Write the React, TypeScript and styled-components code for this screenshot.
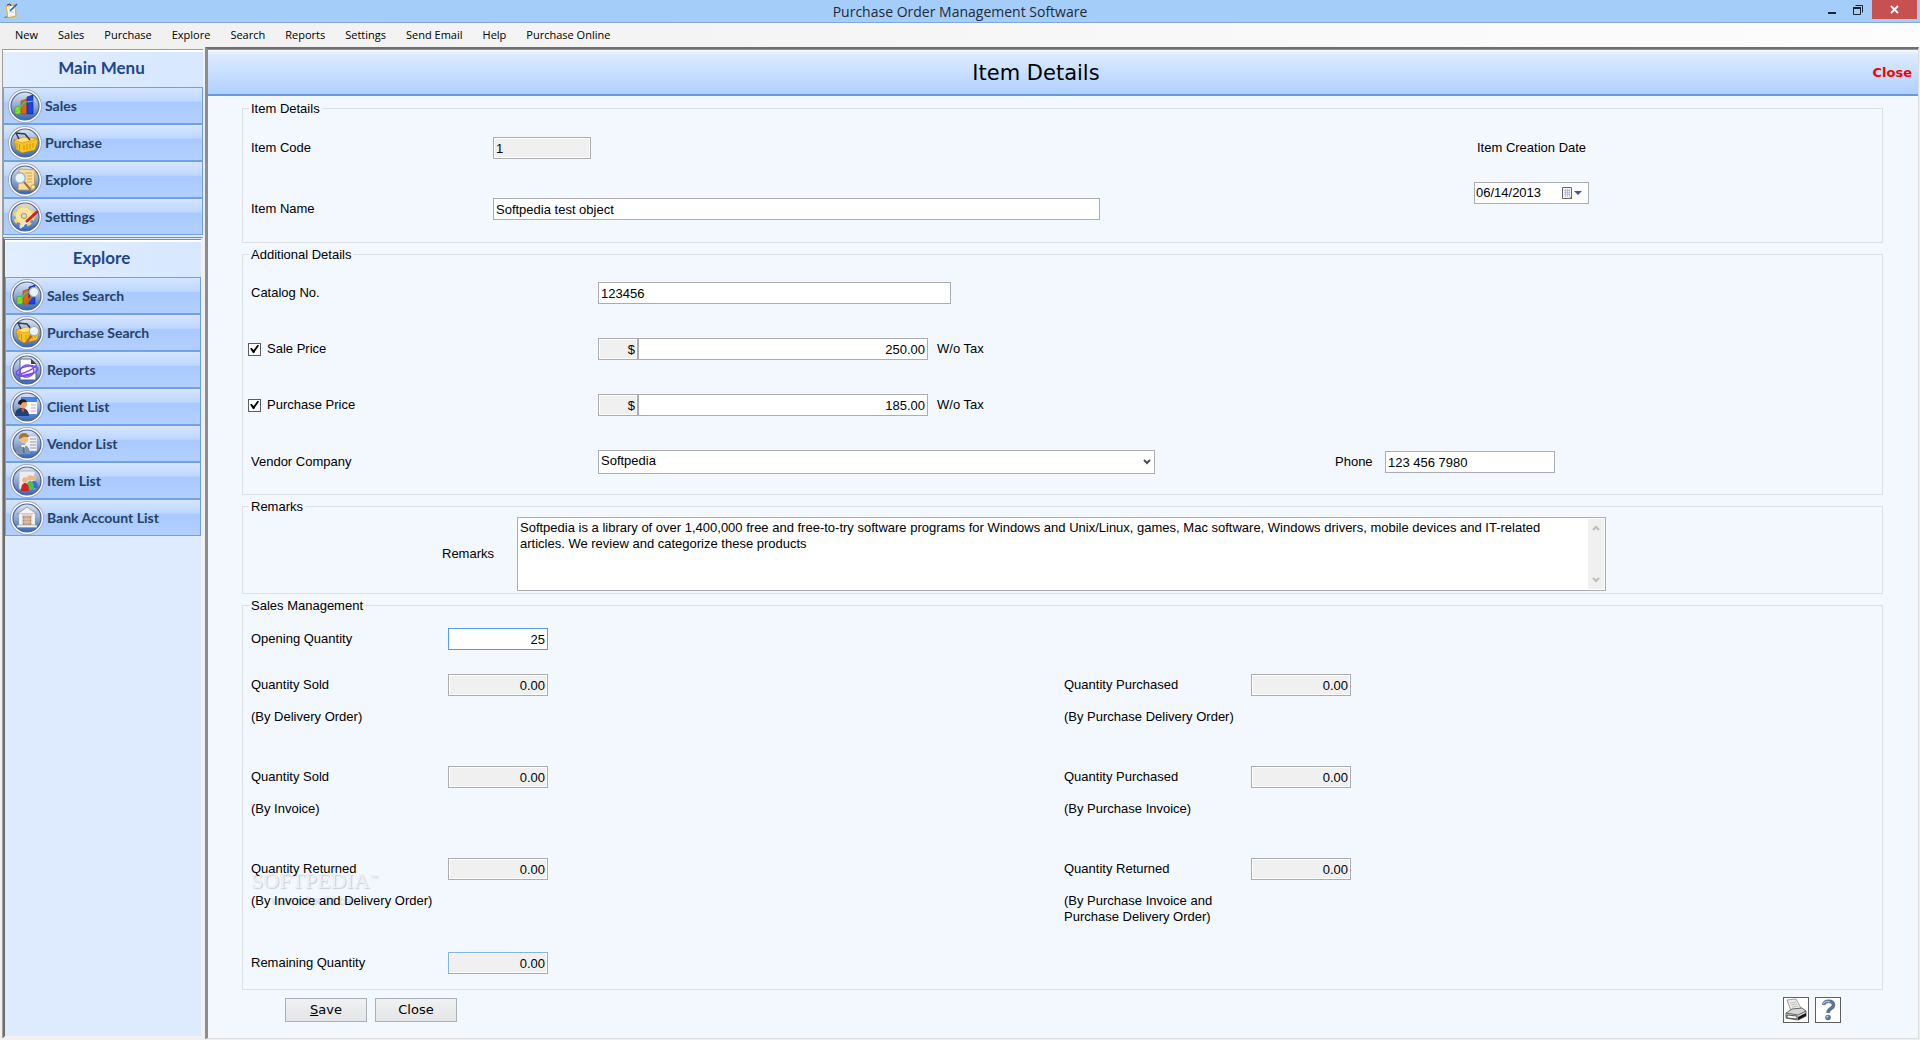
import React, { useState } from "react";
import styled, { createGlobalStyle } from "styled-components";

const uiFont = `"Liberation Sans", Arial, sans-serif`;
const menuFont = `"Open Sans", "Noto Sans", sans-serif`;
const sideFont = `Lato, "Open Sans", sans-serif`;
const wideFont = `"DejaVu Sans", Verdana, sans-serif`;

const GlobalStyle = createGlobalStyle`
  *, *::before, *::after { box-sizing: border-box; }
  html, body { margin: 0; padding: 0; }
  body { font: 13px/16px ${uiFont}; color: #000; background: #f0f0f0; }
  button, input, select, textarea { font: inherit; color: inherit; margin: 0; }
  button { cursor: pointer; }
`;

const Window = styled.div`
  display: flex;
  flex-direction: column;
  min-height: 100vh;
`;

/* ---------- title bar ---------- */
const TitleBar = styled.header`
  display: grid;
  grid-template-columns: 1fr auto 1fr;
  align-items: start;
  height: 23px;
  background: #a4cdf9;
  border-bottom: 1px solid #84a8d6;
`;
const AppIcon = styled.svg`
  width: 16px;
  height: 16px;
  margin: 3px 0 0 3px;
`;
const Caption = styled.h1`
  margin: 0;
  font: 400 14px/23px ${menuFont};
  color: #222a35;
`;
const WindowButtons = styled.div`
  display: flex;
  justify-content: flex-end;
  padding-right: 3px;
`;
const WindowButton = styled.button<{ $danger?: boolean }>`
  display: flex;
  align-items: center;
  justify-content: center;
  width: ${(p) => (p.$danger ? 45 : 28)}px;
  height: 19px;
  padding: 0;
  border: 0;
  background: ${(p) => (p.$danger ? "#c75050" : "transparent")};
`;

/* ---------- menu bar ---------- */
const MenuBar = styled.nav`
  display: flex;
  height: 24px;
  padding-left: 5px;
  background: linear-gradient(90deg, #f0f0f0, #fdfdfd);
`;
const MenuItem = styled.button`
  padding: 0 10px;
  border: 0;
  background: none;
  font: 400 11px/24px ${menuFont};
  white-space: nowrap;
`;

/* ---------- body ---------- */
const Body = styled.div`
  flex: 1;
  display: grid;
  grid-template-columns: 205px minmax(0, 1fr);
  padding: 0 1px 1px 0;
`;
const Sidebar = styled.aside`
  display: flex;
  flex-direction: column;
  margin: 2px 2px 1px 2px;
  border-left: 1px solid #a0a0a0;
  border-top: 1px solid #a0a0a0;
  background: #deebff;
`;
const SidePanel = styled.section<{ $inset?: boolean }>`
  ${(p) =>
    p.$inset &&
    `flex: 1;
     margin-top: 2px;
     border-left: 2px solid #6b6b6b;
     border-top: 3px double #8a8a8a;
     border-right: 2px solid #f2f2f2;
     border-bottom: 2px solid #f2f2f2;`}
`;
const SideTitle = styled.h2`
  margin: 0;
  height: 37px;
  padding-right: 3px;
  border-top: 2px solid #fff;
  background: linear-gradient(90deg, #e2eeff, #d6e7ff);
  font: 700 17px/32px ${sideFont};
  color: #1f4690;
  text-align: center;
`;
const SideButton = styled.button`
  display: flex;
  align-items: center;
  gap: 2px;
  width: 100%;
  height: 37px;
  padding: 0 3px;
  border: 1px solid #6fa1e8;
  background: linear-gradient(180deg, #d6e5ff 0%, #bed7ff 38%, #a9caff 40%, #b2cfff 100%);
  font: 700 14px/20px ${sideFont};
  color: #27425f;
  text-align: left;
`;
const Round = styled.svg`
  width: 36px;
  height: 36px;
  flex: none;
`;

const Main = styled.main`
  display: flex;
  flex-direction: column;
  border-left: 3px solid #8d8d8d;
  border-top: 2px solid #6e6e6e;
  border-right: 1px solid #dcdcdc;
  border-bottom: 1px solid #dcdcdc;
  background: #f3f7fe;
`;
const PageHeader = styled.div`
  display: flex;
  align-items: center;
  height: 47px;
  padding: 2px 6px 0 0;
  border-top: 1px solid #6a9ad8;
  border-bottom: 2px solid #6a98d6;
  background: linear-gradient(180deg, #f6faff 0, #deebff 4px, #aed1ff 100%);
`;
const PageTitle = styled.h2`
  flex: 1;
  margin: 0;
  font: 400 21px/28px ${wideFont};
  text-align: center;
`;
const CloseLink = styled.button`
  width: 48px;
  padding: 0;
  border: 0;
  background: none;
  font: 700 13px/16px ${wideFont};
  color: #f60000;
  text-align: right;
`;

/* ---------- form ---------- */
const Form = styled.form`
  display: flex;
  flex-direction: column;
  gap: 4px;
  padding: 5px 35px 0 34px;
`;
const Group = styled.fieldset<{ $pad: string }>`
  position: relative;
  min-width: 0;
  margin: 0;
  padding: ${(p) => p.$pad};
  border: 1px solid #dcdfe3;
`;
const Legend = styled.legend`
  margin-left: -2px;
  padding: 0 2px;
  line-height: 15px;
`;
const Columns = styled.div<{ $cols: string }>`
  display: grid;
  grid-template-columns: ${(p) => p.$cols};
  align-items: center;
`;
const Stack = styled.div<{ $gap: number }>`
  display: flex;
  flex-direction: column;
  gap: ${(p) => p.$gap}px;
`;
const FieldLabel = styled.label<{ $col?: number }>`
  display: flex;
  align-items: center;
  min-height: 22px;
  ${(p) => p.$col && `grid-column: ${p.$col};`}
`;
const Input = styled.input<{ $width?: string; $right?: boolean; $accent?: string }>`
  width: ${(p) => p.$width || "100%"};
  min-width: 0;
  height: 22px;
  padding: 0 2px;
  border: 1px solid ${(p) => p.$accent || "#abadb3"};
  border-radius: 0;
  background: ${(p) => (p.readOnly ? "#f0f0f0" : "#fff")};
  box-shadow: inset 0 0 0 1px #fff;
  text-align: ${(p) => (p.$right ? "right" : "left")};
  outline: none;
`;
const Suffix = styled.span`
  padding-left: 9px;
`;
const DateStack = styled.div`
  display: flex;
  flex-direction: column;
  gap: 23px;
  align-self: start;
`;
const DateLabel = styled(FieldLabel)`
  padding-left: 3px;
  white-space: nowrap;
`;
const DateBox = styled.div`
  display: flex;
  align-items: center;
  height: 22px;
  padding-right: 5px;
  border: 1px solid #abadb3;
  background: #fff;
`;
const DateInput = styled.input`
  flex: 1;
  min-width: 0;
  padding: 0 1px;
  border: 0;
  outline: none;
  background: none;
`;
const IconOnly = styled.button`
  display: flex;
  padding: 0;
  border: 0;
  background: none;
`;
const CheckLabel = styled.label`
  display: flex;
  align-items: center;
  gap: 6px;
  margin-left: -3px;
`;
const CheckBox = styled.input`
  appearance: none;
  display: grid;
  place-items: center;
  width: 13px;
  height: 13px;
  border: 1px solid #5c5c5c;
  background: #fff;
  &:checked::after {
    content: "";
    width: 9px;
    height: 9px;
    background: #000;
    clip-path: polygon(0 42%, 20% 38%, 40% 62%, 84% 4%, 100% 12%, 44% 96%, 30% 92%);
  }
`;
const SelectWrap = styled.div`
  position: relative;
  svg {
    position: absolute;
    right: 4px;
    top: 9px;
    pointer-events: none;
  }
`;
const Select = styled.select`
  appearance: none;
  display: block;
  width: 100%;
  height: 24px;
  padding: 0 20px 2px 2px;
  border: 1px solid #abadb3;
  border-radius: 0;
  background: #fff;
  outline: none;
`;
const MemoBox = styled.div`
  display: flex;
  height: 74px;
  padding-right: 1px;
  border: 1px solid #abadb3;
  background: #fff;
`;
const Memo = styled.textarea`
  flex: 1;
  min-width: 0;
  padding: 2px 0 0 2px;
  border: 0;
  outline: none;
  resize: none;
  overflow: hidden;
  background: none;
`;
const ScrollTrack = styled.div`
  display: flex;
  flex-direction: column;
  justify-content: space-between;
  align-items: center;
  width: 16px;
  margin: 1px 0;
  padding: 6px 0;
  background: #f0f0f0;
`;
const QtyGrid = styled.div`
  position: relative;
  display: grid;
  grid-template-columns: 297px 516fr 287px 531fr;
  grid-template-rows: 46px 92px 92px 94px 22px;
`;
const QtyCell = styled.div<{ $side?: boolean }>`
  display: grid;
  grid-template-columns: minmax(0, 1fr) 100px;
  grid-template-rows: 22px auto;
  row-gap: 13px;
  align-content: start;
  grid-column: ${(p) => (p.$side ? 3 : 1)};
`;
const Note = styled.span`
  grid-column: 1;
`;
const Watermark = styled.div`
  position: absolute;
  left: 8px;
  top: 256px;
  display: flex;
  flex-direction: column;
  align-items: center;
  pointer-events: none;
  color: #eceff5;
  text-shadow: 1px 1px 1px #c6cad3;
  font: 400 22px/24px "Liberation Serif", serif;
`;
const Trade = styled.sup`
  font: 400 8px/8px ${uiFont};
`;
const WatermarkSite = styled.span`
  font: 400 10px/16px ${uiFont};
  color: #e1e5ee;
`;

const Footer = styled.div`
  display: flex;
  align-items: center;
  height: 26px;
  margin-top: 3px;
  padding: 0 42px 0 43px;
`;
const PushButton = styled.button`
  width: 82px;
  height: 24px;
  margin-right: 8px;
  padding: 0;
  border: 1px solid #a9b0b8;
  background: linear-gradient(180deg, #f1f1f1, #e3e5e8);
  font: 400 13px/22px ${wideFont};
`;
const Tools = styled.div`
  display: flex;
  gap: 6px;
  margin-left: auto;
`;
const ToolButton = styled.button`
  display: flex;
  align-items: center;
  justify-content: center;
  width: 26px;
  height: 26px;
  padding: 0;
  border: 1px solid #5f5f5f;
  background: #fff;
`;

/* ---------- sidebar pictures ---------- */
const Bars = () => (
  <>
    <path d="M8 19l6-1v8H8z" fill="#8fe010" stroke="#4c9a10" strokeWidth="0.6" />
    <path d="M14 13l6-2v15h-6z" fill="#e0621c" stroke="#a03c10" strokeWidth="0.6" />
    <path d="M20 9l6-2v19h-6z" fill="#1d45dc" stroke="#0c2796" strokeWidth="0.6" />
    <path d="M8 24c5-1 6-9 11-10 3 0 4-1 8-1" fill="none" stroke="#2fd98a" strokeWidth="1.2" />
  </>
);
const Basket = () => (
  <>
    <path d="M7 15l3-1 20-1 1 3-3 9-13 3-6-4z" fill="#f9c422" stroke="#b97f08" strokeWidth="0.7" />
    <path d="M7 15l10-3 14 2-16 4z" fill="#ffe070" stroke="#c68c0c" strokeWidth="0.6" />
    <path d="M10 18v5M12.500 19v6M17 20v5M20 19v6M23 19v5M26 18v5" stroke="#d3930c" strokeWidth="1" />
    <path d="M12 14l-3-6 9 1 5 6" fill="none" stroke="#323a46" strokeWidth="1.5" strokeLinejoin="round" />
  </>
);
const Lens = ({ x, y }: { x: number; y: number }) => (
  <g transform={`translate(${x} ${y})`}>
    <path d="M-2 4l-6 8" stroke="#b06a2a" strokeWidth="2.2" strokeLinecap="round" />
    <circle r="4.6" fill="#e8f2fc" stroke="#9fb3c8" strokeWidth="1.2" />
    <path d="M-2-1a3 3 0 0 1 3-2" stroke="#fff" fill="none" />
  </g>
);
const pictures: Record<string, React.ReactNode> = {
  sales: <Bars />,
  purchase: <Basket />,
  explore: (
    <>
      <path d="M12 7l16 1-1 20H11z" fill="#fbdd98" stroke="#c5923a" strokeWidth="0.8" />
      <path d="M18 11h7M20 14h5M20 17h5M20 20h5" stroke="#d9a148" />
      <path d="M17 20l6 7" stroke="#9a7650" strokeWidth="2.2" strokeLinecap="round" />
      <circle cx="13" cy="16" r="5.2" fill="#e9f4fd" stroke="#9bb0c7" strokeWidth="1.4" />
      <circle cx="26" cy="25" r="2.2" fill="#ffe9b0" stroke="#c78422" strokeWidth="0.8" />
    </>
  ),
  settings: (
    <>
      <circle cx="17" cy="17" r="9" fill="none" stroke="#f8d25c" strokeWidth="4" strokeDasharray="4 3.07" />
      <circle cx="17" cy="17" r="5.6" fill="none" stroke="#fde49a" strokeWidth="5.6" />
      <circle cx="17" cy="17" r="2.6" fill="#cfdcee" stroke="#b98a22" strokeWidth="0.8" />
      <path d="M13 29l8-8" stroke="#e3e7ee" strokeWidth="2.2" />
      <path d="M20 22l10-9" stroke="#d3202a" strokeWidth="3" strokeLinecap="round" />
    </>
  ),
  salesSearch: (
    <>
      <Bars />
      <Lens x={25} y={14} />
    </>
  ),
  purchaseSearch: (
    <>
      <Basket />
      <Lens x={25} y={16} />
    </>
  ),
  reports: (
    <>
      <path d="M11 7h11l5 5v16H11z" fill="#fafaff" stroke="#50545e" strokeWidth="0.9" />
      <path d="M22 7l5 5h-5z" fill="#3a3e4a" />
      <g fill="none" stroke="#7b4bec" strokeWidth="1.4">
        <ellipse cx="18" cy="19" rx="11" ry="4.6" transform="rotate(-14 18 19)" />
        <ellipse cx="18" cy="19" rx="7" ry="6" transform="rotate(-14 18 19)" />
        <path d="M9 23c6-2 13-4 18-9M12 24l13-3" />
      </g>
    </>
  ),
  client: (
    <>
      <path d="M12 8h16v17H12z" fill="#f6f7fd" />
      <path d="M12 8h16v5H12z" fill="#3f86e8" />
      <path d="M22 16h5M22 19h5M22 22h5" stroke="#d9a6d8" strokeWidth="1.1" />
      <path d="M6 27c0-6 3-8 7-8s7 3 7 8z" fill="#1f3f78" />
      <path d="M12 20l2 4 2-5z" fill="#e64b2a" />
      <circle cx="14" cy="15" r="4.2" fill="#f0a56c" />
      <path d="M9 15c0-6 8-6 9-2-3 1-5-1-6 3z" fill="#2c1a14" />
    </>
  ),
  vendor: (
    <>
      <path d="M16 10h12v15H16z" fill="#eef2f8" stroke="#a9b4c4" strokeWidth="0.6" />
      <path d="M21 13h6M21 16h6M21 19h6M21 22h6" stroke="#8e9aac" />
      <path d="M7 28c0-7 3-9 7-9s7 3 7 9z" fill="#8794a6" />
      <path d="M12 19l2 5 3-5z" fill="#f2f5fa" />
      <path d="M14 21l1 6" stroke="#3a6fd0" strokeWidth="1.6" />
      <circle cx="15" cy="13" r="4.4" fill="#e9c08c" />
      <path d="M10 13c-1-7 9-8 10-2-3 0-6-1-7 1z" fill="#a3762e" />
    </>
  ),
  item: (
    <>
      <path d="M10 8h16v18H10z" fill="#ececee" stroke="#a8adb6" strokeWidth="0.8" />
      <circle cx="25" cy="15" r="2.6" fill="#eab88a" />
      <path d="M21 26c0-7 2-8 4-8s4 2 4 7z" fill="#3a6fd8" />
      <circle cx="21" cy="15" r="2.8" fill="#eab88a" />
      <path d="M17 27c0-7 2-9 4-9s4 2 4 8z" fill="#48c052" />
      <circle cx="16" cy="17" r="2.8" fill="#eab88a" />
      <path d="M12 28c0-6 2-8 4-8s4 2 4 8z" fill="#d8201c" />
    </>
  ),
  bank: (
    <>
      <path d="M8 14l10-7 10 7z" fill="#f4f4f4" stroke="#8d8f96" strokeWidth="0.8" />
      <path d="M10 14h16v11H10z" fill="#d9d6d2" />
      <path d="M14 16h8v9h-8z" fill="#b98a68" />
      <path d="M16 16v9M18 16v9M20 16v9M14 19h8M14 22h8" stroke="#f0dccb" strokeWidth="0.7" />
      <path d="M11.500 14v11M24.500 14v11" stroke="#fafafa" strokeWidth="2.2" />
      <path d="M8 25h20v2.500H8z" fill="#f4f4f4" stroke="#8d8f96" strokeWidth="0.6" />
    </>
  ),
};

const SidePicture = ({ name }: { name: string }) => (
  <Round viewBox="0 0 36 36" aria-hidden="true">
    <defs>
      <linearGradient id={`disc-${name}`} x1="0" y1="0" x2="0" y2="1">
        <stop offset="0" stopColor="#dbe4f2" />
        <stop offset="0.5" stopColor="#8fa9d4" />
        <stop offset="1" stopColor="#3166bd" />
      </linearGradient>
    </defs>
    <circle cx="18" cy="18" r="17" fill="#a3acbd" />
    <circle cx="18" cy="18" r="16" fill="#fff" />
    <circle cx="18" cy="18" r="14" fill={`url(#disc-${name})`} stroke="#4a6290" strokeWidth="1.200" />
    {pictures[name]}
  </Round>
);

const Chevron = ({ up, color }: { up?: boolean; color: string }) => (
  <svg width="8" height="6" viewBox="0 0 8 6" aria-hidden="true">
    <path d={up ? "M1 5l3-3 3 3" : "M1 1l3 3 3-3"} fill="none" stroke={color} strokeWidth="2" />
  </svg>
);

const menus = ["New", "Sales", "Purchase", "Explore", "Search", "Reports", "Settings", "Send Email", "Help", "Purchase Online"];
const mainMenu = [
  ["sales", "Sales"],
  ["purchase", "Purchase"],
  ["explore", "Explore"],
  ["settings", "Settings"],
];
const exploreMenu = [
  ["salesSearch", "Sales Search"],
  ["purchaseSearch", "Purchase Search"],
  ["reports", "Reports"],
  ["client", "Client List"],
  ["vendor", "Vendor List"],
  ["item", "Item List"],
  ["bank", "Bank Account List"],
];

const remarks =
  "Softpedia is a library of over 1,400,000 free and free-to-try software programs for Windows and Unix/Linux, games, Mac software, Windows drivers, mobile devices and IT-related articles. We review and categorize these products";

interface QtyProps {
  id: string;
  label: string;
  note?: string;
  value?: string;
  side?: boolean;
  editable?: boolean;
  accent?: string;
}
const Quantity = ({ id, label, note, value = "0.00", side, editable, accent }: QtyProps) => (
  <QtyCell $side={side}>
    <FieldLabel htmlFor={id}>{label}</FieldLabel>
    <Input id={id} defaultValue={value} readOnly={!editable} $right $accent={accent} />
    {note && <Note>{note}</Note>}
  </QtyCell>
);

interface PriceProps {
  id: string;
  label: string;
  value: string;
}
const PriceRow = ({ id, label, value }: PriceProps) => {
  const [on, setOn] = useState(true);
  return (
    <Columns $cols="347px 40px 290fr 954fr">
      <CheckLabel>
        <CheckBox type="checkbox" checked={on} onChange={(e) => setOn(e.target.checked)} />
        {label}
      </CheckLabel>
      <Input aria-label={`${label} currency`} defaultValue="$" readOnly $right />
      <Input id={id} aria-label={label} defaultValue={value} $right />
      <Suffix>W/o Tax</Suffix>
    </Columns>
  );
};

export default function App() {
  return (
    <Window>
      <GlobalStyle />
      <TitleBar>
        <AppIcon viewBox="0 0 16 16" aria-hidden="true">
          <path d="M0 15h7l-2-3z" fill="#7d93ad" />
          <path d="M3 3l9-1 1 11-8 2z" fill="#fff" stroke="#e8b32a" strokeWidth="1.300" />
          <path d="M4 2l3-1 1 2" fill="none" stroke="#3a3a3a" />
          <path d="M6 6l5 0M6 9l5 0" stroke="#b9c6dc" />
          <path d="M7 8l7-7" stroke="#2a5bc4" strokeWidth="1.600" />
        </AppIcon>
        <Caption>Purchase Order Management Software</Caption>
        <WindowButtons>
          <WindowButton aria-label="Minimize">
            <svg width="12" height="12" viewBox="0 0 12 12">
              <path d="M4 9h8" stroke="#1f2630" strokeWidth="2" />
            </svg>
          </WindowButton>
          <WindowButton aria-label="Restore">
            <svg width="12" height="12" viewBox="0 0 12 12">
              <path d="M3.500 1.500h7v7M1.500 3.500h7v7h-7z" fill="none" stroke="#1f2630" />
              <path d="M1 4h8" stroke="#1f2630" strokeWidth="2" />
            </svg>
          </WindowButton>
          <WindowButton $danger aria-label="Close window">
            <svg width="9" height="9" viewBox="0 0 9 9">
              <path d="M1 1l7 7M8 1L1 8" stroke="#fff" strokeWidth="1.800" />
            </svg>
          </WindowButton>
        </WindowButtons>
      </TitleBar>
      <MenuBar>
        {menus.map((m) => (
          <MenuItem key={m}>{m}</MenuItem>
        ))}
      </MenuBar>
      <Body>
        <Sidebar>
          <SidePanel>
            <SideTitle>Main Menu</SideTitle>
            {mainMenu.map(([icon, text]) => (
              <SideButton key={icon}>
                <SidePicture name={icon} />
                {text}
              </SideButton>
            ))}
          </SidePanel>
          <SidePanel $inset>
            <SideTitle>Explore</SideTitle>
            {exploreMenu.map(([icon, text]) => (
              <SideButton key={icon}>
                <SidePicture name={icon} />
                {text}
              </SideButton>
            ))}
          </SidePanel>
        </Sidebar>
        <Main>
          <PageHeader>
            <PageTitle>Item Details</PageTitle>
            <CloseLink>Close</CloseLink>
          </PageHeader>
          <Form onSubmit={(e) => e.preventDefault()}>
            <Group $pad="21px 0 22px 8px">
              <Legend>Item Details</Legend>
              <Columns $cols="849fr 374fr 115px 293fr">
                <Stack $gap={39}>
                  <Columns $cols="242px minmax(0, 1fr)">
                    <FieldLabel htmlFor="code">Item Code</FieldLabel>
                    <Input id="code" defaultValue="1" readOnly $width="98px" />
                  </Columns>
                  <Columns $cols="242px minmax(0, 1fr)">
                    <FieldLabel htmlFor="name">Item Name</FieldLabel>
                    <Input id="name" defaultValue="Softpedia test object" />
                  </Columns>
                </Stack>
                <span />
                <DateStack>
                  <DateLabel htmlFor="created">Item Creation Date</DateLabel>
                  <DateBox>
                    <DateInput id="created" defaultValue="06/14/2013" />
                    <IconOnly type="button" aria-label="Open calendar">
                      <svg width="22" height="14" viewBox="0 0 22 14">
                        <path d="M1.500 1.500h9v11h-9z" fill="#f2f3f7" stroke="#6c6464" />
                        <path d="M3 4.500h6M3 6.500h6M3 8.500h6M4.500 3v8M6.500 3v8M8.500 3v8" stroke="#a9b3cb" strokeWidth="0.700" />
                        <path d="M8 13l3-3v3z" fill="#6c6464" />
                        <path d="M13 5h8l-4 4z" fill="#44597f" />
                      </svg>
                    </IconOnly>
                  </DateBox>
                </DateStack>
              </Columns>
            </Group>

            <Group $pad="20px 0 20px 8px">
              <Legend>Additional Details</Legend>
              <Stack $gap={34}>
                <Columns $cols="347px 353fr 931fr">
                  <FieldLabel htmlFor="catalog">Catalog No.</FieldLabel>
                  <Input id="catalog" defaultValue="123456" />
                </Columns>
                <PriceRow id="sale" label="Sale Price" value="250.00" />
                <PriceRow id="buy" label="Purchase Price" value="185.00" />
                <Columns $cols="347px 557fr 180fr 50px 170fr 327fr">
                  <FieldLabel htmlFor="vendor">Vendor Company</FieldLabel>
                  <SelectWrap>
                    <Select id="vendor" defaultValue="Softpedia">
                      <option>Softpedia</option>
                    </Select>
                    <Chevron color="#4c4c4c" />
                  </SelectWrap>
                  <FieldLabel htmlFor="phone" $col={4}>
                    Phone
                  </FieldLabel>
                  <Input id="phone" defaultValue="123 456 7980" />
                </Columns>
              </Stack>
            </Group>

            <Group $pad="3px 0 2px 8px">
              <Legend>Remarks</Legend>
              <Columns $cols="191px 75px 1089fr 276fr">
                <FieldLabel htmlFor="remarks" $col={2}>
                  Remarks
                </FieldLabel>
                <MemoBox>
                  <Memo id="remarks" defaultValue={remarks} />
                  <ScrollTrack>
                    <Chevron up color="#bcbcbc" />
                    <Chevron color="#bcbcbc" />
                  </ScrollTrack>
                </MemoBox>
              </Columns>
            </Group>

            <Group $pad="15px 0 15px 8px">
              <Legend>Sales Management</Legend>
              <Watermark>
                <span>
                  SOFTPEDIA<Trade>™</Trade>
                </span>
                <WatermarkSite>www.softpedia.com</WatermarkSite>
              </Watermark>
              <QtyGrid>
                <Quantity id="opening" label="Opening Quantity" value="25" editable accent="#569de5" />
                <Quantity id="soldDo" label="Quantity Sold" note="(By Delivery Order)" />
                <Quantity id="purDo" side label="Quantity Purchased" note="(By Purchase Delivery Order)" />
                <Quantity id="soldInv" label="Quantity Sold" note="(By Invoice)" />
                <Quantity id="purInv" side label="Quantity Purchased" note="(By Purchase Invoice)" />
                <Quantity id="retSale" label="Quantity Returned" note="(By Invoice and Delivery Order)" />
                <Quantity
                  id="retPur"
                  side
                  label="Quantity Returned"
                  note="(By Purchase Invoice and Purchase Delivery Order)"
                />
                <Quantity id="remaining" label="Remaining Quantity" accent="#7eb4ea" />
              </QtyGrid>
            </Group>

            <Footer>
              <PushButton type="submit">
                <u>S</u>ave
              </PushButton>
              <PushButton type="button">Close</PushButton>
              <Tools>
                <ToolButton type="button" aria-label="Print">
                  <svg width="24" height="24" viewBox="0 0 24 24">
                    <path d="M3 2l9-1 5 9-10 3z" fill="#ececec" stroke="#8a8a8a" strokeWidth="0.800" />
                    <path d="M6 5l6-1M7 7l6-1M8 9l6-1" stroke="#bdbdbd" />
                    <path d="M2 15l6-4 10-1 4 3v5l-8 4-12-2z" fill="#d6d6d6" stroke="#4a4a4a" strokeWidth="0.800" />
                    <path d="M2 15l12 2 8-4" fill="none" stroke="#4a4a4a" strokeWidth="0.800" />
                    <path d="M14 19l8-4v3l-8 4z" fill="#141414" />
                    <path d="M3 17l10 1v3L3 20z" fill="#fafafa" stroke="#333" strokeWidth="0.800" />
                  </svg>
                </ToolButton>
                <ToolButton type="button" aria-label="Help">
                  <svg width="24" height="24" viewBox="0 0 24 24">
                    <path d="M7.500 7c1-5 10-5 10 0 0 4-5.500 3-5.500 8" fill="none" stroke="#5b7395" strokeWidth="3.600" />
                    <path d="M7 6c2-3 5-3 7-2" fill="none" stroke="#b4c2d6" strokeWidth="1.200" />
                    <circle cx="12" cy="19.500" r="2.800" fill="#5b7395" />
                    <circle cx="11.300" cy="18.700" r="1" fill="#c8d3e2" />
                  </svg>
                </ToolButton>
              </Tools>
            </Footer>
          </Form>
        </Main>
      </Body>
    </Window>
  );
}
